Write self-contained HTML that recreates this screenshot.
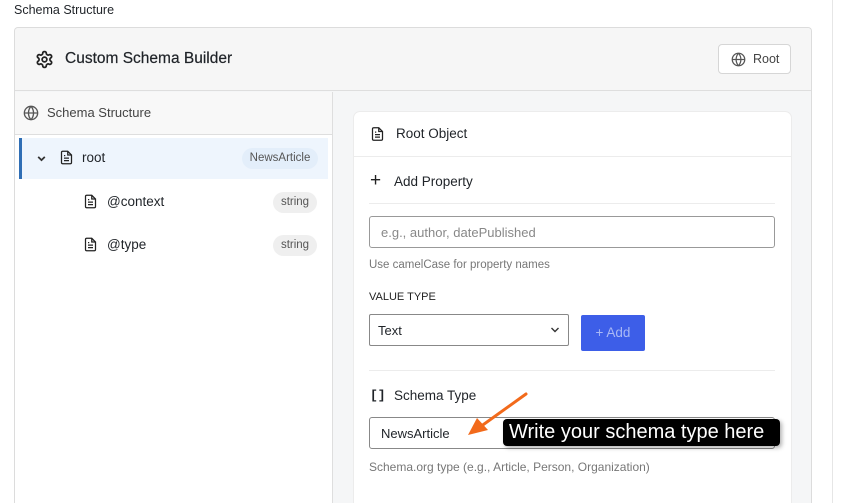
<!DOCTYPE html>
<html style="height:503px;overflow:hidden"><head><style>
*{box-sizing:border-box;margin:0;padding:0}
body{width:841px;height:503px;overflow:hidden;background:#fff;font-family:"Liberation Sans",sans-serif;color:#1f2328;position:relative}
.abs{position:absolute}
.t{font-size:13.5px}
svg{display:block}
</style></head><body>
<div class="abs" style="left:14px;top:3px;font-size:12.5px;color:#1f2328">Schema Structure</div>
<div class="abs" style="left:832px;top:0;width:1px;height:503px;background:#e6e6e6"></div>
<div class="abs" style="left:14px;top:27px;width:798px;height:476px;border:1px solid #dcdcdc;border-bottom:none;border-radius:4px 4px 0 0;background:#f5f6f7;overflow:hidden">
  <div class="abs" style="left:0;top:0;width:796px;height:63px;background:#f6f6f6;border-bottom:1px solid #dedede">
    <svg class="abs" style="left:20px;top:22px" width="19" height="19" viewBox="0 0 24 24" fill="none" stroke="#222" stroke-width="2.2" stroke-linecap="round" stroke-linejoin="round"><path d="M12.22 2h-.44a2 2 0 0 0-2 2v.18a2 2 0 0 1-1 1.73l-.43.25a2 2 0 0 1-2 0l-.15-.08a2 2 0 0 0-2.73.73l-.22.38a2 2 0 0 0 .73 2.730l.15.1a2 2 0 0 1 1 1.72v.51a2 2 0 0 1-1 1.74l-.15.09a2 2 0 0 0-.73 2.73l.22.38a2 2 0 0 0 2.73.73l.15-.08a2 2 0 0 1 2 0l.43.25a2 2 0 0 1 1 1.73V20a2 2 0 0 0 2 2h.44a2 2 0 0 0 2-2v-.18a2 2 0 0 1 1-1.73l.43-.25a2 2 0 0 1 2 0l.15.08a2 2 0 0 0 2.73-.73l.22-.39a2 2 0 0 0-.73-2.73l-.15-.08a2 2 0 0 1-1-1.74v-.5a2 2 0 0 1 1-1.74l.15-.09a2 2 0 0 0 .73-2.730l-.22-.38a2 2 0 0 0-2.73-.73l-.15.08a2 2 0 0 1-2 0l-.43-.25a2 2 0 0 1-1-1.73V4a2 2 0 0 0-2-2z"/><circle cx="12" cy="12" r="3"/></svg>
    <div class="abs" style="left:50px;top:22px;font-size:15.5px;color:#1f2328;-webkit-text-stroke:0.2px #1f2328">Custom Schema Builder</div>
    <div class="abs" style="left:703px;top:16px;width:73px;height:30px;border:1px solid #d6d6d6;border-radius:4px;background:#fff">
      <svg class="abs" style="left:12px;top:7px" width="15" height="15" viewBox="0 0 24 24" fill="none" stroke="#555" stroke-width="2"><circle cx="12" cy="12" r="10"/><path d="M2 12h20M12 2a15 15 0 0 1 0 20M12 2a15 15 0 0 0 0 20"/></svg>
      <div class="abs" style="left:34px;top:7px;font-size:12.5px;color:#444">Root</div>
    </div>
  </div>
  <div class="abs" style="left:0;top:64px;width:318px;height:420px;background:#fff;border-right:1px solid #dedede">
    <div class="abs" style="left:0;top:0;width:317px;height:43px;background:#f8f8f8;border-bottom:1px solid #dedede">
      <svg class="abs" style="left:8px;top:13px" width="16" height="16" viewBox="0 0 24 24" fill="none" stroke="#555" stroke-width="2"><circle cx="12" cy="12" r="10"/><path d="M2 12h20M12 2a15 15 0 0 1 0 20M12 2a15 15 0 0 0 0 20"/></svg>
      <div class="abs" style="left:32px;top:13px;font-size:13px;color:#444">Schema Structure</div>
    </div>
    <div class="abs" style="left:4px;top:46px;width:309px;height:41px;background:#eef5fd;border-left:3px solid #2f6eb5">
      <svg class="abs" style="left:14px;top:15px" width="11" height="11" viewBox="0 0 10 10" fill="none" stroke="#333" stroke-width="1.6"><path d="M2 3.5l3 3 3-3"/></svg>
      <svg class="abs" style="left:37px;top:11px" width="15" height="17" viewBox="0 0 24 24" fill="none" stroke="#222" stroke-width="2"><path d="M14 2H6a2 2 0 0 0-2 2v16a2 2 0 0 0 2 2h12a2 2 0 0 0 2-2V8z"/><path d="M14 2v6h6M16 13H8M16 17H8M10 9H8"/></svg>
      <div class="abs t" style="left:60px;top:12px">root</div>
      <div class="abs" style="left:220px;top:10px;width:76px;height:21px;border-radius:11px;background:#e3eefa;font-size:11.5px;color:#555;text-align:center;line-height:21px">NewsArticle</div>
    </div>
    <svg class="abs" style="left:68px;top:101px" width="15" height="17" viewBox="0 0 24 24" fill="none" stroke="#222" stroke-width="2"><path d="M14 2H6a2 2 0 0 0-2 2v16a2 2 0 0 0 2 2h12a2 2 0 0 0 2-2V8z"/><path d="M14 2v6h6M16 13H8M16 17H8M10 9H8"/></svg>
    <div class="abs t" style="left:92px;top:102px">@context</div>
    <div class="abs" style="left:258px;top:100px;width:44px;height:21px;border-radius:11px;background:#efefef;font-size:11.5px;color:#555;text-align:center;line-height:21px">string</div>
    <svg class="abs" style="left:68px;top:144px" width="15" height="17" viewBox="0 0 24 24" fill="none" stroke="#222" stroke-width="2"><path d="M14 2H6a2 2 0 0 0-2 2v16a2 2 0 0 0 2 2h12a2 2 0 0 0 2-2V8z"/><path d="M14 2v6h6M16 13H8M16 17H8M10 9H8"/></svg>
    <div class="abs t" style="left:92px;top:145px">@type</div>
    <div class="abs" style="left:258px;top:143px;width:44px;height:21px;border-radius:11px;background:#efefef;font-size:11.5px;color:#555;text-align:center;line-height:21px">string</div>
  </div>
  <div class="abs" style="left:338px;top:83px;width:439px;height:400px;background:#fff;border-radius:7px;border:1px solid #ececec">
    <div class="abs" style="left:0;top:0;width:437px;height:45px;border-bottom:1px solid #ececec">
      <svg class="abs" style="left:16px;top:13px" width="15" height="18" viewBox="0 0 24 24" fill="none" stroke="#222" stroke-width="2"><path d="M14 2H6a2 2 0 0 0-2 2v16a2 2 0 0 0 2 2h12a2 2 0 0 0 2-2V8z"/><path d="M14 2v6h6M16 13H8M16 17H8M10 9H8"/></svg>
      <div class="abs t" style="left:42px;top:14px">Root Object</div>
    </div>
    <div class="abs" style="left:16px;top:62px;font-size:19px;line-height:14px;color:#222">+</div>
    <div class="abs t" style="left:40px;top:62px">Add Property</div>
    <div class="abs" style="left:15px;top:91px;width:406px;height:1px;background:#ececec"></div>
    <div class="abs" style="left:15px;top:104px;width:406px;height:32px;border:1px solid #999;border-radius:3px">
      <div class="abs" style="left:11px;top:8px;font-size:13px;color:#888">e.g., author, datePublished</div>
    </div>
    <div class="abs" style="left:15px;top:147px;font-size:11.5px;color:#777">Use camelCase for property names</div>
    <div class="abs" style="left:15px;top:179px;font-size:11px;color:#222">VALUE TYPE</div>
    <div class="abs" style="left:15px;top:202px;width:200px;height:32px;border:1px solid #888;border-radius:2px">
      <div class="abs" style="left:8px;top:8px;font-size:13px">Text</div>
      <svg class="abs" style="left:180px;top:11px" width="10" height="8" viewBox="0 0 10 8" fill="none" stroke="#333" stroke-width="1.4"><path d="M1.5 2l3.5 3.5 3.5-3.5"/></svg>
    </div>
    <div class="abs" style="left:227px;top:203px;width:64px;height:36px;background:#3d5ee8;border-radius:2px;color:#a9b8f5;font-size:13.5px;text-align:center;line-height:36px">+ Add</div>
    <div class="abs" style="left:15px;top:258px;width:406px;height:1px;background:#ececec"></div>
    <div class="abs" style="left:16px;top:276px;font-size:13px;font-weight:bold;font-family:'Liberation Mono',monospace">[]</div>
    <div class="abs t" style="left:40px;top:276px">Schema Type</div>
    <div class="abs" style="left:15px;top:305px;width:406px;height:32px;border:1px solid #888;border-radius:3px">
      <div class="abs" style="left:11px;top:8px;font-size:13px">NewsArticle</div>
    </div>
    <div class="abs" style="left:15px;top:348px;font-size:12px;color:#777">Schema.org type (e.g., Article, Person, Organization)</div>
  </div>
</div>
<svg class="abs" style="left:455px;top:390px" width="80" height="55" viewBox="0 0 80 55"><path d="M71 4L25 37" stroke="#f26a1b" stroke-width="3" stroke-linecap="round"/><path d="M13 45L22 28L33 40Z" fill="#f26a1b"/></svg>
<div class="abs" style="left:503px;top:419px;width:277px;height:27px;background:#000;border-radius:4px;box-shadow:2px 2px 4px rgba(0,0,0,.3);color:#fff;font-size:20px;line-height:27px;padding-left:6px">Write your schema type here</div>
</body></html>
